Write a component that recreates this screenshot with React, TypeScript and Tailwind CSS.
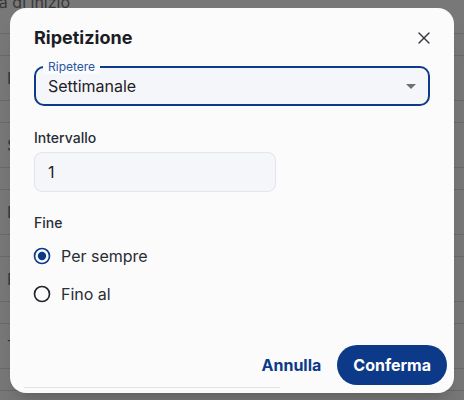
import { X } from "lucide-react";

const rows = ["Nome", "Stato", "Descrizione", "Frequenza", "Tipo", "Note"];

function Radio({ checked, label }: { checked?: boolean; label: string }) {
  return (
    <label className="flex h-[38px] items-center gap-[9px]">
      <svg
        viewBox="0 0 24 24"
        className={`-ml-[2px] h-5 w-5 ${checked ? "text-[#0d3a88]" : "text-[#23252b]"}`}
      >
        <circle cx="12" cy="12" r="9" fill="none" stroke="currentColor" strokeWidth="2" />
        {checked && <circle cx="12" cy="12" r="5" fill="currentColor" />}
      </svg>
      <span className="text-[16px] leading-6 text-[#2a2d34]">{label}</span>
    </label>
  );
}

export default function App() {
  return (
    <div className="relative h-[400px] w-[464px] overflow-hidden bg-white font-['Inter','Liberation_Sans',sans-serif]">
      {/* page behind the dialog */}
      <div className="flex flex-col text-[16px] text-[#777]">
        <div className="-ml-[27px] -mt-[10px] h-6 leading-6">Data di inizio</div>
        <div className="mt-[19px] flex flex-col">
          {rows.map((r) => (
            <div key={r} className="flex flex-col">
              <div className="h-[22px] border-t border-[#e0e0e0]" />
              <div className="flex h-[45px] items-center border-t border-[#e0e0e0] pl-[7px]">
                {r}
              </div>
            </div>
          ))}
        </div>
      </div>

      {/* backdrop */}
      <div className="absolute inset-0 bg-black/[0.53]" />

      {/* dialog */}
      <div className="absolute left-[10px] top-[8px] flex h-[385px] w-[444px] flex-col rounded-2xl bg-[#fbfbfc] shadow-xl">
        <div className="flex flex-col px-6 pt-4">
          <div className="flex h-7 items-center justify-between">
            <h2 className="text-[18px] font-bold leading-7 text-[#1b1d24]">Ripetizione</h2>
            <button className="-mr-[6px] flex h-6 w-6 items-center justify-center text-[#33353b]">
              <X size={20} strokeWidth={1.6} />
            </button>
          </div>

          <div className="relative mt-[14px] flex h-10 items-center justify-between rounded-[10px] border-2 border-[#0d3a8a] bg-[#f5f6fa] pl-3 pr-3">
            <span className="absolute -top-[8px] left-[7px] bg-[#fafbfc] px-[5px] text-[12px] leading-[14px] text-[#2b55a5]">
              Ripetere
            </span>
            <span className="text-[16px] leading-6 text-[#1f2127]">Settimanale</span>
            <svg viewBox="0 0 10 5" className="h-[5px] w-[10px] text-[#6f7074]">
              <polygon points="0,0 10,0 5,5" fill="currentColor" />
            </svg>
          </div>

          <span className="mt-[22px] text-[14px] font-medium leading-5 text-[#2a2d34]">Intervallo</span>
          <div className="mt-1 flex h-10 w-[242px] items-center rounded-lg border border-[#e3e5ea] bg-[#f5f6f9] pl-[13px]">
            <span className="text-[16px] leading-6 text-[#1f2127]">1</span>
          </div>

          <span className="mt-[21px] text-[14px] font-medium leading-5 text-[#2a2d34]">Fine</span>
          <div className="mt-1 flex flex-col">
            <Radio checked label="Per sempre" />
            <Radio label="Fino al" />
          </div>
        </div>

        <div className="mt-auto flex justify-end pr-[7px]">
          <button className="flex h-10 items-center px-4 text-[16px] font-bold text-[#0d3a88]">
            Annulla
          </button>
          <button className="flex h-10 items-center rounded-full bg-[#0d3a88] px-4 text-[16px] font-bold text-white">
            Conferma
          </button>
        </div>
        <div className="ml-[14px] mt-[2px] h-px w-[256px] bg-[#e2e2e4]" />
        <div className="h-[5px]" />
      </div>
    </div>
  );
}
